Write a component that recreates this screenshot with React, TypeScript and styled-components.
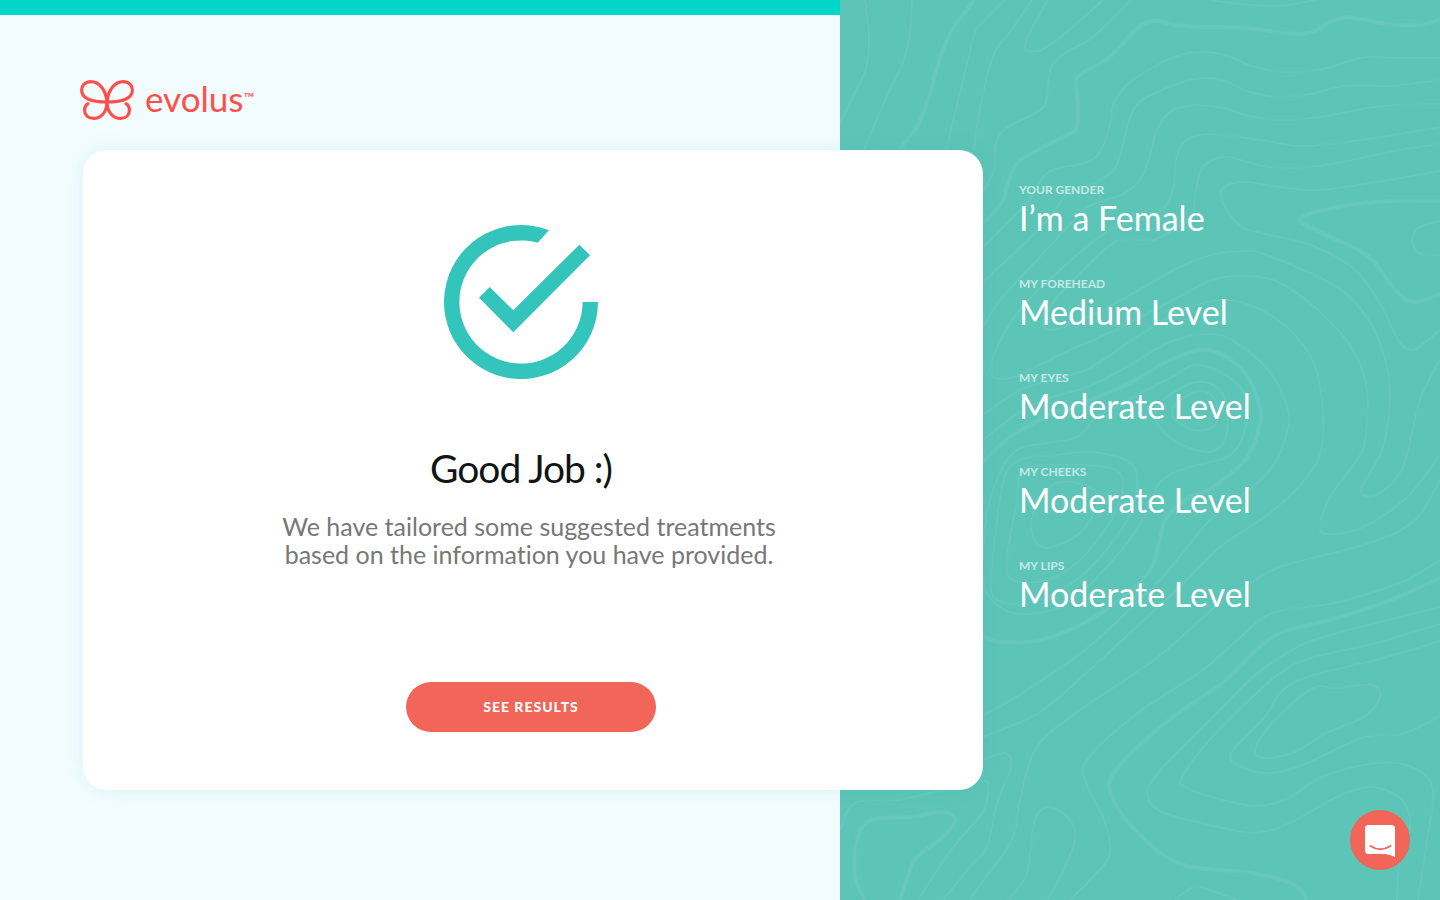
import React from 'react';
import styled, { createGlobalStyle } from 'styled-components';

const GlobalStyle = createGlobalStyle`
  *, *::before, *::after { box-sizing: border-box; }
  body {
    margin: 0;
    background: #f2fcff;
    font-family: Lato, 'Liberation Sans', sans-serif;
    font-variant-ligatures: none;
    -webkit-font-smoothing: antialiased;
  }
  h1, p, dl, dt, dd { margin: 0; }
`;

const Page = styled.div`
  display: grid;
  grid-template-columns: 7fr 5fr;
  min-height: 100vh;
`;

const Main = styled.main`
  position: relative;
  z-index: 1;
  border-top: 15px solid #02d5c9;
`;

const Brand = styled.a`
  display: flex;
  align-items: center;
  gap: 11px;
  width: max-content;
  height: 40px;
  margin: 65px 0 30px 80px;
  color: #ff4f4a;
  text-decoration: none;
`;

const Wordmark = styled.span`
  display: flex;
  align-items: center;
  padding-bottom: 4px;
  font-size: 35px;
  line-height: 36px;
`;

const Trade = styled.small`
  font-size: 14px;
  line-height: 16px;
`;

const Card = styled.section`
  display: flex;
  flex-direction: column;
  align-items: center;
  min-height: 640px;
  margin: 0 -143px 0 83px;
  padding: 75px 24px 58px;
  border-radius: 24px;
  background: #fff;
  box-shadow: 0 0 20px rgba(2, 180, 160, 0.1);
  text-align: center;
`;

const CheckMark = styled.svg`
  width: 154px;
  height: 154px;
  margin-right: 24px;
`;

const Title = styled.h1`
  margin: 65px 24px 0 0;
  color: #101414;
  font-size: 39px;
  font-weight: 400;
  line-height: 48px;
  letter-spacing: -1px;
`;

const Lead = styled.p`
  width: 540px;
  max-width: 100%;
  margin: 20px 8px 0 0;
  color: #777;
  font-size: 25px;
  line-height: 28px;
`;

const ResultsButton = styled.button`
  width: 250px;
  height: 50px;
  margin: auto 4px 0 0;
  border: 0;
  border-radius: 25px;
  background: #f26559;
  color: #fff;
  font: 900 14px/20px Lato, 'Liberation Sans', sans-serif;
  letter-spacing: 1px;
  cursor: pointer;
`;

const Summary = styled.aside`
  position: relative;
  overflow: hidden;
  padding: 182px 24px 60px 179px;
  background: #5dc5b8;
`;

const Contours = styled.svg`
  position: absolute;
  top: 0;
  left: 0;
  width: 600px;
  height: 900px;
  fill: none;
  stroke: #66c7bc;
`;

const Answers = styled.dl`
  position: relative;
  display: flex;
  flex-direction: column;
  gap: 38px;
`;

const Label = styled.dt`
  color: #c3e9e4;
  font-size: 12px;
  font-weight: 700;
  line-height: 16px;
  text-transform: uppercase;
`;

const Value = styled.dd`
  color: #fff;
  font-size: 34px;
  line-height: 40px;
`;

const ChatButton = styled.button`
  position: fixed;
  right: 30px;
  bottom: 30px;
  z-index: 2;
  width: 60px;
  height: 60px;
  padding: 0;
  border: 0;
  border-radius: 50%;
  background: #f26559;
  cursor: pointer;
`;

type Point = [number, number];
interface Contour {
  points: Point[];
  bold?: boolean;
  closed?: boolean;
}

const contours: Contour[] = [
  { points: [[25, 0], [29, 37], [26, 68], [13, 97], [0, 123]] },
  { points: [[72, 0], [70, 33], [63, 62], [46, 98], [24, 150]] },
  { bold: true, points: [[135, 0], [115, 25], [101, 55], [90, 93], [78, 125], [59, 150]] },
  { points: [[165, 0], [143, 22], [134, 35], [124, 77], [106, 150]] },
  { points: [[192, 0], [170, 32], [156, 50], [146, 80], [138, 120], [134, 150]] },
  { points: [[208, 0], [190, 32], [185, 47], [190, 51], [201, 50], [222, 36], [263, 0]] },
  { points: [[291, 0], [253, 37], [225, 53], [212, 66], [208, 85], [206, 102], [199, 111], [165, 129], [156, 143], [154, 170], [143, 192]] },
  { points: [[370, 0], [400, 4], [433, 6], [455, 4], [475, 0]] },
  { bold: true, points: [[600, 19], [585, 24], [562, 25], [535, 22], [508, 17], [490, 22], [475, 31], [460, 34], [438, 32], [405, 28], [365, 27], [335, 25], [320, 21], [308, 22], [295, 30], [270, 57], [241, 74], [236, 85], [238, 105], [237, 127], [229, 134], [200, 149], [178, 162], [169, 180], [162, 202], [143, 224]] },
  { points: [[600, 58], [560, 58], [527, 57], [510, 61], [482, 69], [448, 72], [415, 67], [390, 57], [367, 52], [340, 55], [310, 69], [288, 84], [274, 103], [270, 125], [262, 148], [248, 162], [212, 170], [198, 185], [185, 205], [143, 247]] },
  { points: [[600, 80], [570, 84], [547, 86], [505, 86], [470, 94], [440, 97], [410, 92], [383, 80], [365, 78], [343, 82], [302, 100], [290, 118], [284, 140], [275, 168], [255, 183], [228, 192], [215, 210], [190, 238], [143, 282]] },
  { points: [[600, 104], [560, 105], [528, 108], [480, 117], [440, 120], [410, 116], [383, 108], [356, 105], [330, 112], [317, 130], [310, 155], [302, 177], [285, 193], [248, 207], [225, 230], [195, 262], [160, 300], [143, 327]] },
  { points: [[600, 127], [560, 134], [528, 139], [490, 144], [459, 146], [420, 140], [383, 135], [360, 135], [343, 143], [336, 160], [334, 185], [326, 205], [310, 217], [280, 225], [255, 240], [220, 270], [188, 300], [166, 330], [152, 360], [151, 374], [160, 379], [176, 376], [230, 350], [280, 328], [333, 300], [373, 280], [407, 276], [440, 283], [480, 312], [513, 350], [527, 390], [525, 440], [517, 460], [490, 497], [480, 527], [490, 534], [523, 527], [567, 497], [600, 455]] },
  { points: [[600, 144], [565, 149], [536, 155], [478, 166], [430, 167], [400, 160], [383, 157], [363, 167], [356, 190], [352, 217], [337, 227], [313, 240], [277, 241], [240, 273], [215, 300], [203, 320], [205, 328], [217, 329], [250, 316], [281, 300], [340, 267], [375, 254], [407, 251], [427, 255], [490, 283], [520, 308], [540, 343], [550, 390], [543, 447], [522, 487], [525, 496], [540, 493], [563, 467], [580, 400], [600, 360]] },
  { points: [[600, 171], [536, 182], [480, 190], [440, 187], [405, 182], [383, 188], [383, 203], [400, 226], [421, 233], [471, 245], [513, 268], [538, 300], [558, 340], [570, 350], [580, 346], [600, 330]] },
  { bold: true, points: [[600, 201], [551, 201], [497, 207], [460, 219], [482, 233], [528, 256], [555, 290], [573, 302], [600, 294]] },
  { points: [[600, 221], [578, 228], [572, 242], [580, 254], [600, 255]] },
  { points: [[143, 415], [180, 390], [220, 378], [250, 368], [300, 335], [343, 310], [383, 300], [417, 308], [453, 333], [477, 373], [483, 440], [467, 477], [430, 513], [380, 547], [340, 587], [318, 607], [255, 665], [200, 712], [143, 737]] },
  { points: [[143, 440], [180, 412], [210, 398], [250, 386], [290, 365], [330, 342], [370, 334], [395, 342], [430, 372], [448, 410], [445, 440], [430, 470], [400, 497], [370, 520], [345, 550], [320, 580], [291, 608], [245, 650], [176, 697], [143, 715]] },
  { bold: true, points: [[143, 462], [170, 437], [210, 415], [250, 400], [290, 383], [330, 360], [367, 350], [400, 367], [417, 397], [420, 423], [407, 457], [373, 487], [345, 500], [325, 520], [320, 540], [310, 570], [280, 600], [240, 625], [200, 640], [160, 642], [143, 636]] },
  { closed: true, points: [[358, 365], [330, 378], [283, 403], [257, 417], [237, 437], [207, 443], [177, 450], [160, 473], [147, 513], [143, 580], [160, 607], [190, 614], [230, 602], [273, 560], [303, 520], [320, 482], [350, 467], [387, 457], [403, 437], [407, 403], [393, 380]] },
  { closed: true, points: [[357, 382], [327, 397], [315, 417], [333, 440], [367, 452], [383, 443], [388, 417], [380, 390]] },
  { closed: true, points: [[358, 391], [337, 403], [333, 417], [353, 430], [373, 427], [378, 413], [373, 397]] },
  { closed: true, points: [[227, 482], [250, 487], [258, 503], [240, 533], [207, 548], [193, 537], [193, 513], [210, 487]] },
  { closed: true, points: [[183, 470], [220, 465], [270, 468], [283, 483], [273, 517], [240, 560], [207, 580], [173, 580], [167, 560], [177, 500]] },
  { closed: true, points: [[163, 483], [180, 460], [217, 455], [253, 452], [290, 463], [297, 487], [283, 527], [240, 577], [190, 603], [155, 598], [152, 570]] },
  { points: [[600, 480], [575, 520], [530, 543], [440, 567], [400, 590], [375, 607], [314, 660], [230, 717], [195, 750], [180, 800], [172, 840], [145, 878], [130, 900]] },
  { points: [[600, 560], [560, 583], [494, 603], [432, 613], [394, 643], [360, 672], [298, 713], [249, 757], [245, 780], [264, 820], [270, 853], [255, 875], [230, 900]] },
  { bold: true, points: [[600, 578], [551, 600], [490, 620], [440, 633], [413, 653], [386, 680], [325, 723], [276, 770], [272, 797], [302, 837], [344, 865], [413, 873], [455, 885], [467, 900]] },
  { points: [[600, 607], [490, 635], [452, 650], [413, 677], [383, 707], [318, 773], [308, 797], [325, 813], [383, 828], [417, 833], [452, 822], [497, 797], [532, 787], [562, 800], [570, 827], [559, 867], [557, 900]] },
  { points: [[600, 624], [536, 643], [471, 658], [440, 673], [406, 703], [367, 743], [342, 777], [345, 787], [383, 800], [417, 806], [448, 798], [482, 777], [536, 763], [574, 768], [593, 790], [587, 840], [578, 900]] },
  { points: [[600, 641], [536, 660], [467, 677], [440, 693], [425, 717], [391, 753], [402, 767], [429, 773], [463, 765], [524, 737], [562, 734], [600, 716]] },
  { closed: true, points: [[471, 689], [497, 688], [532, 685], [540, 697], [524, 717], [486, 733], [455, 752], [425, 758], [415, 750], [432, 723]] },
  { bold: true, points: [[25, 900], [15, 877], [17, 840], [31, 820], [69, 817], [103, 812], [115, 820], [103, 837], [77, 857], [69, 873], [60, 900]] },
  { points: [[0, 830], [15, 803], [57, 800], [103, 790], [143, 781], [148, 790], [142, 813], [111, 850], [78, 900]] },
  { points: [[143, 760], [165, 753], [171, 767], [157, 803], [147, 847], [130, 867], [103, 900]] },
  { points: [[168, 900], [187, 873], [195, 820], [210, 807], [230, 820], [235, 840], [222, 873], [207, 900]] },
  { points: [[335, 900], [354, 887], [375, 892], [397, 900]] },
];

/** Joins the points of a contour with a smooth cubic spline. */
function smoothPath({ points, closed }: Contour): string {
  const n = points.length;
  const at = (i: number): Point =>
    closed ? points[(i + n) % n] : points[Math.max(0, Math.min(n - 1, i))];
  let d = `M${points[0][0]} ${points[0][1]}`;
  for (let i = 0; i < (closed ? n : n - 1); i++) {
    const [a, b, c, e] = [at(i - 1), at(i), at(i + 1), at(i + 2)];
    d += `C${b[0] + (c[0] - a[0]) / 6} ${b[1] + (c[1] - a[1]) / 6} ${c[0] - (e[0] - b[0]) / 6} ${c[1] - (e[1] - b[1]) / 6} ${c[0]} ${c[1]}`;
  }
  return closed ? `${d}Z` : d;
}

const answers = [
  { label: 'Your gender', value: 'I’m a Female' },
  { label: 'My forehead', value: 'Medium Level' },
  { label: 'My eyes', value: 'Moderate Level' },
  { label: 'My cheeks', value: 'Moderate Level' },
  { label: 'My lips', value: 'Moderate Level' },
];

const Butterfly = () => (
  <svg width="54" height="40" viewBox="0 0 54 40" fill="none" stroke="currentColor" strokeWidth="3.2" strokeLinecap="round" aria-hidden="true">
    <path d="M27 22C26 10 19 1.600 11 1.600C5 1.600 1.600 5.500 1.600 10C1.600 18 11 22 27 22C43 22 52.400 18 52.400 10C52.400 5.500 49 1.600 43 1.600C35 1.600 28 10 27 22Z" />
    <path d="M27 22C27 32 21 38.400 13.500 38.400C8 38.400 4.600 35 4.600 30.500C4.600 27.500 5.500 25 8 23.800" />
    <path d="M27 22C27 32 33 38.400 40.500 38.400C46 38.400 49.400 35 49.400 30.500C49.400 27.500 48.500 25 46 23.800" />
  </svg>
);

export default function App() {
  return (
    <>
      <GlobalStyle />
      <Page>
        <Main>
          <Brand href="#" aria-label="evolus">
            <Butterfly />
            <Wordmark>
              evolus<Trade>™</Trade>
            </Wordmark>
          </Brand>
          <Card>
            <CheckMark viewBox="0 0 154 154" fill="#33c4bb" aria-hidden="true">
              <path d="M105 5.300A77 77 0 1 0 154 77H138.600A61.600 61.600 0 1 1 93.700 17.700Z" />
              <path d="M45.700 62L69.300 85.300L135.300 19.700L146 30.300L69.300 107.300L35 72.700Z" />
            </CheckMark>
            <Title>Good Job :)</Title>
            <Lead>We have tailored some suggested treatments based on the information you have provided.</Lead>
            <ResultsButton type="button">SEE RESULTS</ResultsButton>
          </Card>
        </Main>
        <Summary>
          <Contours viewBox="0 0 600 900" aria-hidden="true">
            {contours.map((contour, i) => (
              <path key={i} d={smoothPath(contour)} strokeWidth={contour.bold ? 4 : 2} />
            ))}
          </Contours>
          <Answers>
            {answers.map(({ label, value }) => (
              <div key={label}>
                <Label>{label}</Label>
                <Value>{value}</Value>
              </div>
            ))}
          </Answers>
        </Summary>
      </Page>
      <ChatButton type="button" aria-label="Open chat">
        <svg width="60" height="60" viewBox="0 0 60 60" aria-hidden="true">
          <path d="M18.500 15H41.500A3.500 3.500 0 0 1 45 18.500V47Q40 44.500 35 44H18.500A3.500 3.500 0 0 1 15 40.500V18.500A3.500 3.500 0 0 1 18.500 15Z" fill="#fff" />
          <path d="M20.500 36Q30 42.500 40.500 36" fill="none" stroke="#f26559" strokeWidth="2" strokeLinecap="round" />
        </svg>
      </ChatButton>
    </>
  );
}
